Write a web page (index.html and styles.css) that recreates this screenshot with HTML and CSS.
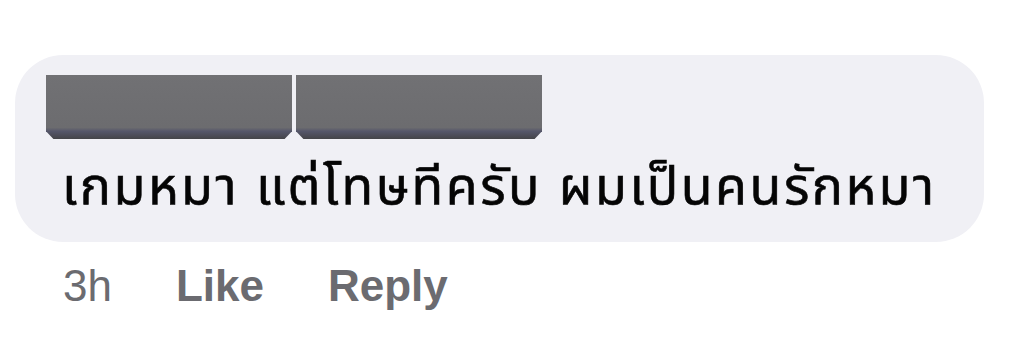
FILE: index.html
```html
<!DOCTYPE html>
<html>
<head>
    <meta charset="UTF-8">
    <link rel="stylesheet" href="styles.css">
</head>
<body>
    <div class="comment">
        <div class="bubble">
            <div class="author">
                <span class="redact"></span>
                <span class="redact"></span>
            </div>
            <div class="text">เกมหมา แต่โทษทีครับ ผมเป็นคนรักหมา</div>
        </div>
        <div class="actions">
            <span class="time">3h</span>
            <span class="action">Like</span>
            <span class="action">Reply</span>
        </div>
    </div>
</body>
</html>
```

FILE: styles.css
```css
body {
    margin: 0;
    background-color: #ffffff;
    font-family: 'Liberation Sans', Arial, 'Noto Sans Thai', 'Noto Sans', sans-serif;
}

.comment {
    padding: 55px 0 0 15px;
}

.bubble {
    width: 969px;
    height: 187px;
    box-sizing: border-box;
    padding: 20px 0 0 31px;
    background-color: #f0f0f5;
    border-radius: 48px;
}

.author {
    display: flex;
    gap: 4px;
    height: 64px;
}

.redact {
    display: block;
    width: 246px;
    height: 64px;
    background: linear-gradient(to bottom, #717174 0%, #6c6c6f 82%, #55566a 88%, #444448 100%);
    clip-path: polygon(0 0, 100% 0, 100% 88%, 97% 100%, 3% 100%, 0 88%);
}

.text {
    padding-left: 16px;
    margin-top: 17px;
    font-size: 52px;
    line-height: 60px;
    letter-spacing: 2.5px;
    color: #050505;
    -webkit-text-stroke: 0.6px #050505;
}

.actions {
    display: flex;
    gap: 64px;
    padding: 18px 0 0 48px;
    font-size: 44px;
    line-height: 52px;
    color: #6b6b70;
}

.time {
    font-weight: 400;
}

.action {
    font-weight: 700;
}
```
